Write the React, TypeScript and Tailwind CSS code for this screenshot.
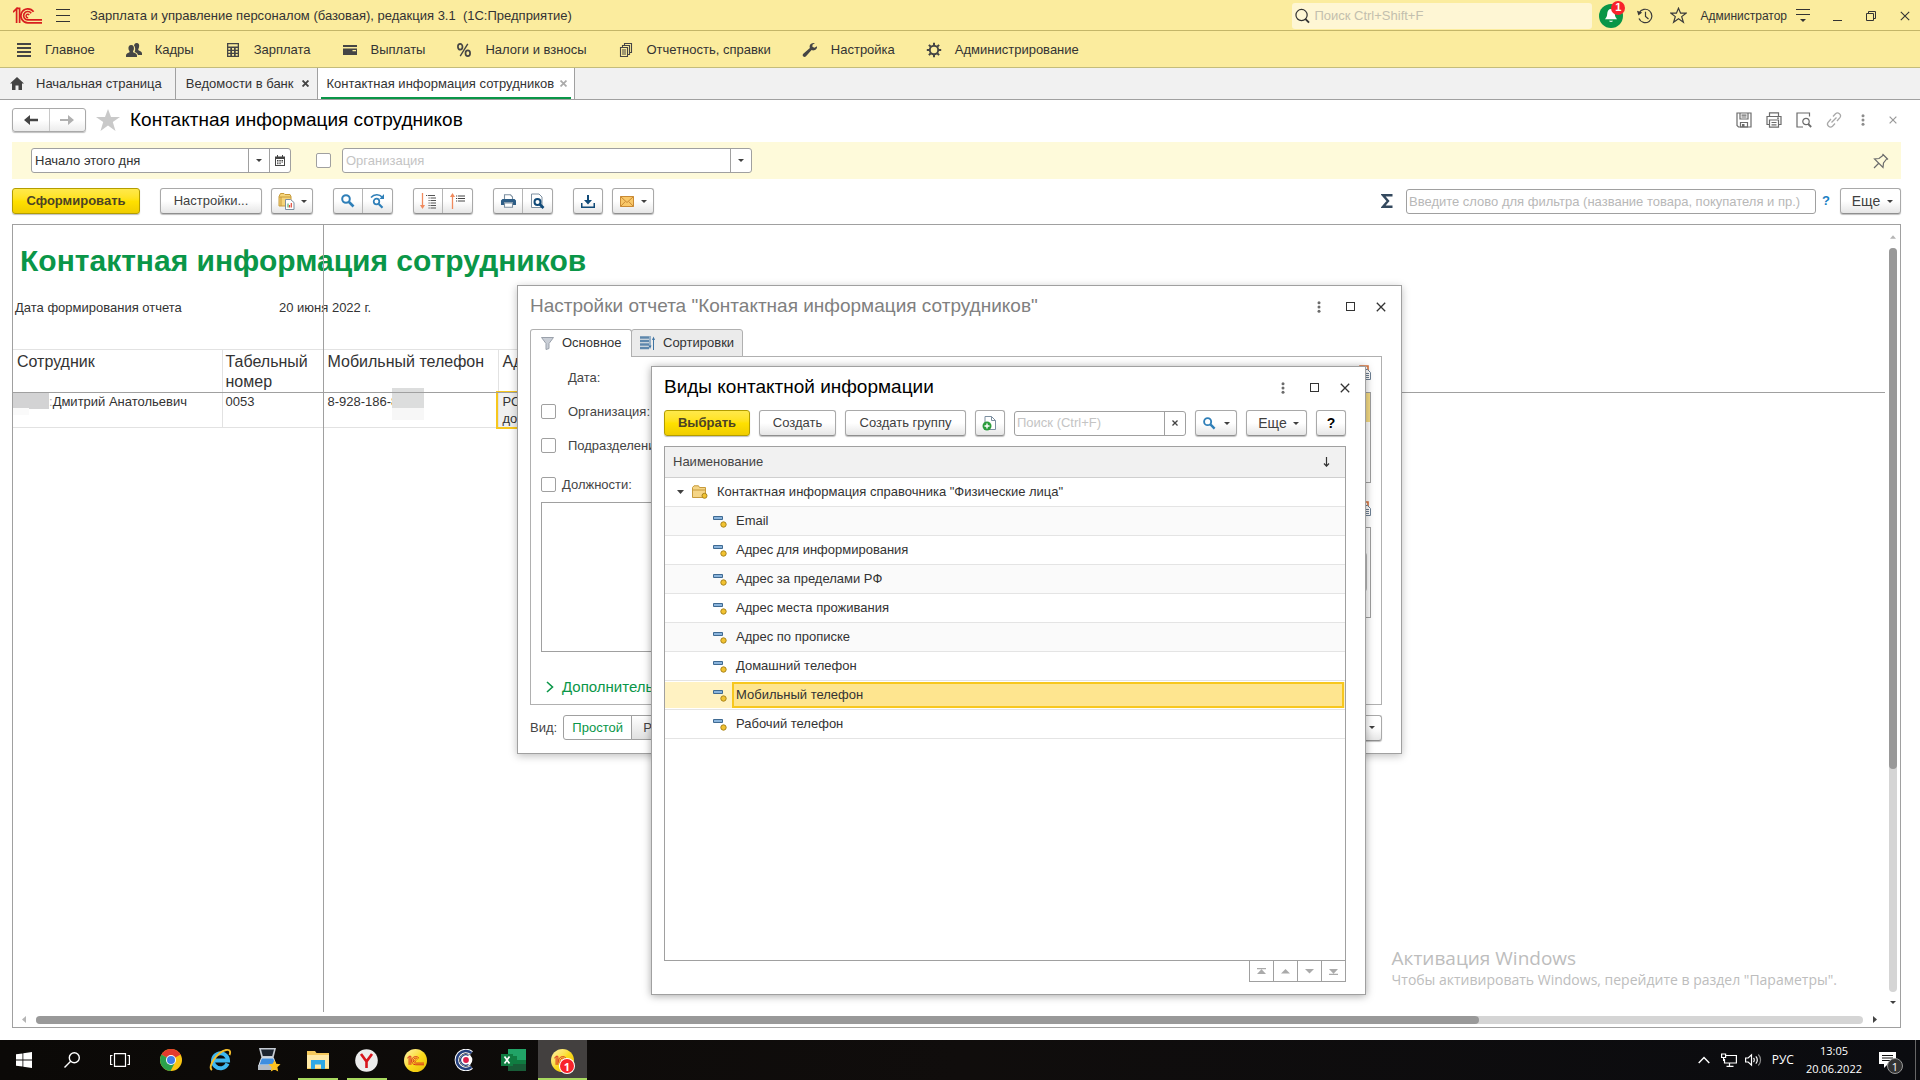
import React from "react";

type P = { children?: React.ReactNode; className?: string };

const BTN =
  "flex h-[26px] items-center justify-center rounded-[3px] border border-[#a9a9a9] border-b-[#8f8f8f] bg-linear-to-b from-white from-50% to-[#e6e6e6] text-sm text-[#404040] shadow-[0_1px_1px_rgba(0,0,0,0.25)]";
const YBTN =
  "flex h-[26px] items-center justify-center rounded-[3px] border border-[#b39d00] bg-linear-to-b from-[#ffe94a] via-[#ffe100] to-[#f0cd00] text-[13px] font-bold text-[#4c4326] shadow-[0_1px_1px_rgba(0,0,0,0.25)]";
const SEG = "flex h-full w-[30px] items-center justify-center";

function Caret({ className = "text-[#404040]" }: { className?: string }) {
  return (
    <svg width="6" height="3" viewBox="0 0 6 3" className={className} aria-hidden="true">
      <path d="M0 0h6L3 3z" fill="currentColor" />
    </svg>
  );
}

function Cross({ size = 7, w = 1.6, className = "" }: { size?: number; w?: number; className?: string }) {
  return (
    <svg width={size} height={size} viewBox="0 0 10 10" className={className} aria-hidden="true">
      <path d="M.8.8l8.4 8.4M9.2.8L.8 9.2" stroke="currentColor" strokeWidth={(w * 10) / size} fill="none" />
    </svg>
  );
}

function Dots({ className = "text-[#6b6b6b]" }: { className?: string }) {
  return (
    <svg width="4" height="12" viewBox="0 0 4 12" className={className} aria-hidden="true">
      <circle cx="2" cy="1.7" r="1.5" fill="currentColor" />
      <circle cx="2" cy="6" r="1.5" fill="currentColor" />
      <circle cx="2" cy="10.3" r="1.5" fill="currentColor" />
    </svg>
  );
}

function Magnifier({ size = 14, stroke = "#2f7fb8" }: { size?: number; stroke?: string }) {
  return (
    <svg width={size} height={size} viewBox="0 0 14 14" fill="none" stroke={stroke} aria-hidden="true">
      <circle cx="5" cy="5" r="3.8" strokeWidth="2" />
      <path d="M8 8l4.5 4.5" strokeWidth="2.6" />
    </svg>
  );
}

function LogoGlyph({ w, h, color }: { w: number; h: number; color: string }) {
  return (
    <svg width={w} height={h} viewBox="0 0 29 17" fill="none" stroke={color} strokeWidth="1.7" aria-hidden="true">
      <path d="M0 5.2L3.6 1.6V16M6.6 16V1.3H3.2" />
      <path d="M20.6 4.8A7 7 0 1 0 15 15.8H29" />
      <path d="M18.2 6.2A4.2 4.2 0 1 0 15 12.9H29" />
      <path d="M16.2 8a1.7 1.7 0 1 0 -1 2.6" strokeWidth="1.4" />
    </svg>
  );
}

/* ---------- title bar ---------- */

function TitleBar() {
  return (
    <header className="flex h-[31px] items-center border-b border-[#c4b668] bg-[#fbec9e] pt-px pl-[13px] text-[#333]">
      <LogoGlyph w={29} h={17} color="#d81e1e" />
      <button aria-label="Меню" className="ml-[14px] flex w-[14px] flex-col gap-[5px]">
        <span className="h-px w-full bg-[#333]" />
        <span className="h-px w-full bg-[#333]" />
        <span className="h-px w-full bg-[#333]" />
      </button>
      <h1 className="ml-5 flex-1 text-[13px] whitespace-pre">
        Зарплата и управление персоналом (базовая), редакция 3.1  (1С:Предприятие)
      </h1>
      <label className="flex h-[26px] w-[300px] items-center gap-1 rounded-[3px] bg-[#fef6d4] pl-[3px]">
        <svg width="16" height="16" viewBox="0 0 16 16" fill="none" stroke="#333" aria-hidden="true">
          <circle cx="7" cy="7" r="6" strokeWidth="1.3" />
          <path d="M11 11l4 4" strokeWidth="2" />
        </svg>
        <input
          aria-label="Поиск"
          placeholder="Поиск Ctrl+Shift+F"
          className="w-full bg-transparent text-[13px] outline-none placeholder:text-[#c3bfae]"
        />
      </label>
      <button aria-label="Уведомления" className="relative ml-[7px] flex size-6 items-center justify-center rounded-full bg-[#0a9648]">
        <svg width="14" height="16" viewBox="0 0 14 16" fill="#fff" aria-hidden="true">
          <path d="M7 1c2.6 0 3.6 2 3.8 5 .2 2.600 1 3.600 2.200 5.200H1C2.200 9.600 3 8.600 3.200 6 3.400 3 4.400 1 7 1zM5 12.800h4c-.3 1.500-3.700 1.500-4 0z" />
        </svg>
        <span className="absolute -top-[3px] left-3 flex size-[14px] items-center justify-center rounded-full bg-[#f8232c] text-[11px] leading-none font-bold text-white">
          1
        </span>
      </button>
      <button aria-label="История" className="ml-[14px]">
        <svg width="16" height="16" viewBox="0 0 16 16" fill="none" stroke="#3a3a3a" strokeWidth="1.2" aria-hidden="true">
          <path d="M2.200 5A6.700 6.700 0 1 1 2 10.500M8.500 3.800V8.500l3 2.500" />
          <path d="M0 2.800L5.200 4.600 1.400 7.400z" fill="#3a3a3a" stroke="none" />
        </svg>
      </button>
      <button aria-label="Избранное" className="ml-[17px]">
        <svg width="17" height="17" viewBox="0 0 17 17" fill="none" stroke="#3a3a3a" strokeWidth="1.2" aria-hidden="true">
          <path d="M8.500 1.200l2.100 5h5.400l-4.300 3.400 1.700 5.600-4.900-3.400-4.900 3.400 1.700-5.600L1 6.200h5.400z" />
        </svg>
      </button>
      <button className="ml-[13px] text-xs">Администратор</button>
      <button aria-label="Сервис" className="ml-[9px] flex w-[14px] flex-col items-center gap-[4px]">
        <span className="h-px w-full bg-[#333]" />
        <span className="h-px w-full bg-[#333]" />
        <Caret className="text-[#333]" />
      </button>
      <button aria-label="Свернуть" className="mt-[9px] ml-[23px] h-px w-[9px] bg-[#333]" />
      <button aria-label="Восстановить" className="ml-[24px]">
        <svg width="10" height="10" viewBox="0 0 10 10" fill="none" stroke="#333" aria-hidden="true">
          <path d="M.5 2.500h7v7h-7zM2.500 2.500v-2h7v7h-2" />
        </svg>
      </button>
      <button aria-label="Закрыть" className="mr-[10px] ml-[24px] text-[#333]">
        <Cross size={10} w={1.1} />
      </button>
    </header>
  );
}

/* ---------- main menu ---------- */

const G = "#454545";
const MENU: { label: string; icon: React.ReactNode }[] = [
  { label: "Главное", icon: <path d="M1 2h14M1 6h14M1 10h14M1 14h14" stroke={G} strokeWidth="1.8" /> },
  {
    label: "Кадры",
    icon: (
      <path
        fill={G}
        d="M10.500 1c2.500 0 3 2 2.500 4.200-.3 1.300-.8 1.800-.8 2.600 0 1 3.800 1.200 3.800 3.700V13h-4c-.3-1.600-1.800-2.400-3.300-3C9.500 8 9.400 5 8 3.500 8.400 2 9 1 10.500 1zM5.200 3c2.300 0 3 1.900 2.700 4C7.700 8.400 7 8.900 7 9.700c0 1.200 4 1.100 4 4V15H0v-1.300c0-2.900 3.600-2.800 3.600-4 0-.8-.9-1.300-1.100-2.700C2.200 4.900 3 3 5.200 3z"
      />
    ),
  },
  {
    label: "Зарплата",
    icon: (
      <path
        fill={G}
        fillRule="evenodd"
        d="M2 1h12v14H2zM3.300 2.300v2.200h9.400V2.300zM3.300 6v1.800h2V6zm3.700 0v1.800h2V6zm3.700 0v1.800h2V6zM3.300 9v1.800h2V9zM7 9v1.800h2V9zm3.700 0v1.800h2V9zM3.300 12v1.800h2V12zM7 12v1.800h2V12zm3.700 0v1.800h2V12z"
      />
    ),
  },
  { label: "Выплаты", icon: <path fill={G} d="M1 3h14v2H1zM1 6.500h14V13H1zM10.500 8v1.200H14V8z" fillRule="evenodd" /> },
  {
    label: "Налоги и взносы",
    icon: (
      <g fill="none" stroke={G}>
        <ellipse cx="4.200" cy="4.800" rx="2.300" ry="2.900" strokeWidth="1.700" />
        <ellipse cx="11.800" cy="11.200" rx="2.300" ry="2.900" strokeWidth="1.700" />
        <path d="M11.800 1.800L4.200 14.200" strokeWidth="1.400" />
      </g>
    ),
  },
  {
    label: "Отчетность, справки",
    icon: (
      <g fill="none" stroke={G} strokeWidth="1.100">
        <path d="M2.500 5.500h7v9h-7zM4.500 5.500v-2h7v9h-2M6.500 3.500v-2h7v9h-2M4 8h4M4 10h4M4 12h4" />
      </g>
    ),
  },
  {
    label: "Настройка",
    icon: (
      <path
        fill={G}
        d="M15 4.200l-2.600 1.600-2-1 .1-2.100L13 1.100c-2.300-.6-4.700.3-5.300 2.600-.2.900-.1 1.700.2 2.400L1.300 11.700c-.9.900-.8 2 .1 2.800.8.700 1.900.6 2.600-.3L9.600 8c.8.400 1.600.5 2.500.300 2.200-.5 3.300-2.200 2.900-4.100z"
      />
    ),
  },
  {
    label: "Администрирование",
    icon: (
      <g fill="none" stroke={G}>
        <circle cx="8" cy="8" r="4.200" strokeWidth="1.900" />
        <path
          d="M8 .8v2.700M8 12.500v2.700M.8 8h2.700M12.500 8h2.700M2.900 2.900l1.900 1.900M11.200 11.200l1.900 1.900M2.900 13.100l1.900-1.900M11.200 4.800l1.900-1.900"
          strokeWidth="2"
        />
      </g>
    ),
  },
];

function MainMenu() {
  return (
    <nav className="flex h-[37px] items-center gap-[31px] border-b border-[#c4bc7a] bg-[#fbec9e] pt-[2px] pl-4 text-[13px] text-[#333]">
      {MENU.map((m) => (
        <button key={m.label} className="flex items-center gap-[13px] whitespace-nowrap">
          <svg width="16" height="16" viewBox="0 0 16 16" aria-hidden="true">
            {m.icon}
          </svg>
          {m.label}
        </button>
      ))}
    </nav>
  );
}

function TabsBar() {
  return (
    <div className="flex h-8 border-b border-[#a0a0a0] bg-[#f1f1f1] text-[13px] text-[#333]">
      <button className="flex items-center gap-3 border-r border-[#a0a0a0] pr-[13px] pl-[10px]">
        <svg width="14" height="13" viewBox="0 0 14 13" fill="#444" aria-hidden="true">
          <path d="M7 0l7 6.500h-2V13H8.500V8.500h-3V13H2V6.500H0z" />
        </svg>
        Начальная страница
      </button>
      <div className="flex items-center gap-2 border-r border-[#a0a0a0] pr-2 pl-[10px]">
        <button>Ведомости в банк</button>
        <button aria-label="Закрыть вкладку" className="text-[#444]">
          <Cross size={7} w={1.900} />
        </button>
      </div>
      <div className="flex border-r border-[#a0a0a0] bg-white px-[3px]">
        <div className="flex items-center gap-[6px] border-b-2 border-[#0a9648] pt-[2px] pr-1 pl-[6px]">
          <button>Контактная информация сотрудников</button>
          <button aria-label="Закрыть вкладку" className="text-[#aaa]">
            <Cross size={7} w={1.700} />
          </button>
        </div>
      </div>
    </div>
  );
}

/* ---------- form header ---------- */

function FormHeader() {
  return (
    <div className="flex h-[42px] items-center pr-[23px] pb-[2px] pl-3">
      <div className="flex h-6 w-[74px] rounded-[3px] border border-[#a9a9a9] bg-linear-to-b from-white from-50% to-[#ececec] shadow-[0_1px_1px_rgba(0,0,0,0.25)]">
        <button aria-label="Назад" className="flex flex-1 items-center justify-center border-r border-[#c8c8c8]">
          <svg width="14" height="10" viewBox="0 0 14 10" aria-hidden="true">
            <path d="M6 0v3.800h8v2.400H6V10L0 5z" fill="#444" />
          </svg>
        </button>
        <button aria-label="Вперед" className="flex flex-1 items-center justify-center">
          <svg width="14" height="10" viewBox="0 0 14 10" aria-hidden="true">
            <path d="M8 0v4H0v2h8v4l6-5z" fill="#b0b0b0" />
          </svg>
        </button>
      </div>
      <button aria-label="В избранное" className="ml-[10px]">
        <svg width="24" height="22" viewBox="0 0 24 22" fill="#c9c9c9" aria-hidden="true">
          <path d="M12 0l3 8h9l-7.200 5L19.500 22 12 16.500 4.500 22l2.700-9L0 8h9z" />
        </svg>
      </button>
      <h2 className="ml-[10px] flex-1 text-[19px] text-black">Контактная информация сотрудников</h2>
      <div className="flex items-center text-[#6b6b6b]">
        <button aria-label="Сохранить">
          <svg width="16" height="16" viewBox="0 0 16 16" fill="none" stroke="currentColor" strokeWidth="1.200" aria-hidden="true">
            <path d="M1 1h14v14H2.500L1 13.500zM4 1v6h8V1M5.500 3.200h5M5.500 5h5" />
            <path d="M4.500 10.500h7V15h-7z" />
            <path d="M6 12h2.500v3H6z" fill="currentColor" stroke="none" />
          </svg>
        </button>
        <button aria-label="Печать" className="ml-[14px]">
          <svg width="16" height="16" viewBox="0 0 16 16" fill="none" stroke="currentColor" strokeWidth="1.200" aria-hidden="true">
            <path d="M3.500 4V.8h9V4M3.500 12.500H1V4.500h14v8h-2.500M3.500 8h9v7.200h-9zM5.500 10.500h5M5.500 12.800h5M11 6.200h2" />
          </svg>
        </button>
        <button aria-label="Просмотр" className="ml-[14px]">
          <svg width="16" height="16" viewBox="0 0 16 16" fill="none" stroke="currentColor" strokeWidth="1.200" aria-hidden="true">
            <path d="M13.500 4.500V1H1v14h6" />
            <circle cx="10" cy="9.500" r="3.200" />
            <path d="M12.200 12l3 3" strokeWidth="1.800" />
          </svg>
        </button>
        <button aria-label="Ссылка" className="ml-[14px] text-[#a8a8a8]">
          <svg width="16" height="16" viewBox="0 0 16 16" fill="none" stroke="currentColor" strokeWidth="1.300" aria-hidden="true">
            <path d="M7 4.500l2.500-2.700c2.500-2.300 6.500 1 4.400 3.800L11 9M9 11.500l-2.500 2.700c-2.500 2.300-6.500-1-4.400-3.800L5 7M5.500 10.500l5-5" />
          </svg>
        </button>
        <button aria-label="Еще действия" className="ml-[19px]">
          <Dots className="text-[#8c8c8c]" />
        </button>
        <button aria-label="Закрыть" className="ml-[24px] text-[#999]">
          <Cross size={8} w={1.200} />
        </button>
      </div>
    </div>
  );
}

function FilterBand() {
  return (
    <div className="mr-[19px] ml-3 flex h-[37px] items-center bg-[#fefada] pl-[19px] text-[13px]">
      <div className="flex h-[25px] w-[260px] rounded-[3px] border border-[#a0a0a0] bg-white">
        <input aria-label="Дата" defaultValue="Начало этого дня" className="min-w-0 flex-1 pl-[3px] text-[#333] outline-none" />
        <button aria-label="Выбрать период" className="flex w-[21px] items-center justify-center border-l border-[#a0a0a0]">
          <Caret />
        </button>
        <button aria-label="Календарь" className="flex w-[21px] items-center justify-center border-l border-[#a0a0a0]">
          <svg width="10" height="11" viewBox="0 0 10 11" aria-hidden="true">
            <path d="M0 1.500h10V11H0zM1 4v6h8V4z" fill="#444" fillRule="evenodd" />
            <path d="M2.500 0v2M7.500 0v2M2 5.500h1.500M4.300 5.500h1.500M6.500 5.500H8M2 7h1.500M4.300 7h1.500M6.500 7H8M2 8.700h1.500M4.300 8.700h1.500" stroke="#444" />
          </svg>
        </button>
      </div>
      <input
        type="checkbox"
        aria-label="Отбор по организации"
        className="ml-[25px] size-[15px] appearance-none rounded-[2px] border border-[#a0a0a0] bg-white"
      />
      <div className="ml-[11px] flex h-[25px] w-[410px] rounded-[3px] border border-[#a0a0a0] bg-white">
        <input
          aria-label="Организация"
          placeholder="Организация"
          className="min-w-0 flex-1 pl-[3px] outline-none placeholder:text-[#c4c4c4]"
        />
        <button aria-label="Выбрать организацию" className="flex w-[21px] items-center justify-center border-l border-[#a0a0a0]">
          <Caret />
        </button>
      </div>
      <button aria-label="Закрепить" className="mr-3 ml-auto">
        <svg width="16" height="16" viewBox="0 0 16 16" fill="none" stroke="#6b6b6b" strokeWidth="1.200" aria-hidden="true">
          <path d="M9.500 1l5.500 5.500M10.500 2L6 5.500 1.500 6l8.500 8.500.5-4.500L14 5.500M5.500 10.500L1 15" />
        </svg>
      </button>
    </div>
  );
}

function PagePlusIcon() {
  return (
    <svg width="16" height="16" viewBox="0 0 16 16" aria-hidden="true">
      <path d="M3 1.500h6.500l4 4v9H3z" fill="#fff" stroke="#7c8fa0" />
      <path d="M9.500 1.500v4h4" fill="none" stroke="#7c8fa0" />
      <circle cx="5" cy="11" r="4.500" fill="#2b9c3c" />
      <path d="M5 8.500v5M2.500 11h5" stroke="#fff" strokeWidth="1.400" />
    </svg>
  );
}

function Toolbar() {
  return (
    <div className="flex h-[45px] items-center pr-[19px] pb-px pl-3 text-[13px]">
      <button className={YBTN + " w-32"}>Сформировать</button>
      <button className={BTN + " ml-5 w-[102px] text-[13px]"}>Настройки...</button>
      <button aria-label="Варианты отчета" className={BTN + " ml-[9px] w-[42px] gap-[6px]"}>
        <svg width="17" height="17" viewBox="0 0 17 17" aria-hidden="true">
          <path d="M1 3.500V13h12V3.500L12 1.500H7l-1-1H2.500z" fill="#f6d57a" stroke="#c79a3a" />
          <path d="M1 4h12M3 4v9" stroke="#c79a3a" />
          <path d="M7.500 6.500h5l3.500 3v7H7.500z" fill="#fff" stroke="#7c8fa0" />
          <path d="M10 10.500v4" stroke="#3aa655" />
          <path d="M11.500 12v2.500" stroke="#e04a3a" strokeWidth="1.200" />
          <path d="M13.300 10v4.500" stroke="#e04a3a" strokeWidth="1.200" />
        </svg>
        <Caret />
      </button>
      <div className={BTN + " ml-5 w-[60px]"}>
        <button aria-label="Найти" className={SEG + " border-r border-[#b5b5b5]"}>
          <Magnifier />
        </button>
        <button aria-label="Найти далее" className={SEG}>
          <svg width="16" height="16" viewBox="0 0 16 16" fill="none" stroke="#2f7fb8" aria-hidden="true">
            <circle cx="6.500" cy="8.500" r="2.800" strokeWidth="1.700" />
            <path d="M8.800 11l3.700 3.700" strokeWidth="2.200" />
            <path d="M1 4.500C4 .8 9.500.8 12 4" strokeWidth="1.500" />
            <path d="M14 1v5H9.500z" fill="#2f7fb8" stroke="none" />
          </svg>
        </button>
      </div>
      <div className={BTN + " ml-5 w-[60px]"}>
        <button aria-label="Развернуть группы" className={SEG + " border-r border-[#b5b5b5]"}>
          <svg width="16" height="16" viewBox="0 0 16 16" fill="none" aria-hidden="true">
            <path d="M2.500 0v13" stroke="#f08a5d" strokeWidth="1.300" />
            <path d="M0 12h5l-2.500 4z" fill="#f08a5d" />
            <path d="M6 2.500h1.200M8 2.500h7M8.500 5h1.200M10.500 5H16M8.500 7.500h1.200M10.500 7.500H16M8.500 10h1.200M10.500 10H16M8.500 12.500h1.200M10.500 12.500H16M8.500 15h1.200M10.500 15H16" stroke="#555" />
          </svg>
        </button>
        <button aria-label="Свернуть группы" className={SEG}>
          <svg width="16" height="16" viewBox="0 0 16 16" fill="none" aria-hidden="true">
            <path d="M2.500 3v13" stroke="#f08a5d" strokeWidth="1.300" />
            <path d="M0 4h5L2.500 0z" fill="#f08a5d" />
            <path d="M6 3h1.200M8 3h7M6 5.500h1.200M8 5.500h7M6 8h1.200M8 8h7" stroke="#444" />
          </svg>
        </button>
      </div>
      <div className={BTN + " ml-5 w-[60px]"}>
        <button aria-label="Печать" className={SEG + " border-r border-[#b5b5b5]"}>
          <svg width="15" height="14" viewBox="0 0 15 14" aria-hidden="true">
            <path d="M3.500 5V.8h6L11.500 3v2" fill="#fff" stroke="#7c8fa0" strokeWidth="1.100" />
            <path d="M1.500 5h12L15 6.500V11h-3V8.500H3V11H0V6.500z" fill="#2d5d86" />
            <path d="M3.500 9h8v4.300h-8z" fill="#fff" stroke="#7c8fa0" strokeWidth="1.100" />
          </svg>
        </button>
        <button aria-label="Предварительный просмотр" className={SEG}>
          <svg width="15" height="16" viewBox="0 0 15 16" fill="none" aria-hidden="true">
            <path d="M1.500 1h7.500l3 3v10.500H1.500z" fill="#fff" stroke="#7c8fa0" />
            <circle cx="7.500" cy="9" r="3" stroke="#104a78" strokeWidth="2" />
            <path d="M9.500 11l4 4" stroke="#104a78" strokeWidth="2.600" />
          </svg>
        </button>
      </div>
      <button aria-label="Сохранить" className={BTN + " ml-5 w-[30px]"}>
        <svg width="14" height="13" viewBox="0 0 14 13" fill="#104a78" aria-hidden="true">
          <path d="M6 0h2v5h3L7 9.500 3 5h3zM0 8h1.500v3.500h11V8H14v5H0z" />
        </svg>
      </button>
      <button aria-label="Отправить" className={BTN + " ml-[9px] w-[42px] gap-[7px]"}>
        <svg width="14" height="11" viewBox="0 0 14 11" aria-hidden="true">
          <path d="M.5.5h13v10H.5z" fill="#f9c869" stroke="#c98a35" />
          <path d="M.5.5L7 6.500 13.500.5M.5 10.500l4.800-5M13.500 10.500l-4.800-5" fill="none" stroke="#c98a35" />
        </svg>
        <Caret />
      </button>
      <button aria-label="Сумма" className="ml-auto">
        <svg width="12" height="14" viewBox="0 0 12 14" fill="none" stroke="#34495e" strokeWidth="2.400" aria-hidden="true">
          <path d="M11.500 1.200H2l5 5.800-5 5.800h9.500" />
        </svg>
      </button>
      <input
        aria-label="Фильтр"
        placeholder="Введите слово для фильтра (название товара, покупателя и пр.)"
        className="ml-[13px] h-[25px] w-[410px] rounded-[3px] border border-[#a0a0a0] bg-white pl-[2px] outline-none placeholder:text-[#b8b8b8]"
      />
      <button aria-label="Справка" className="ml-[6px] w-[8px] font-bold text-[#1a7fc4]">
        ?
      </button>
      <button className={BTN + " ml-[10px] w-[61px] gap-[7px] pl-1"}>
        Еще <Caret />
      </button>
    </div>
  );
}

/* ---------- report ---------- */

function Report() {
  return (
    <section className="mr-[19px] mb-3 ml-3 flex flex-1 flex-col border border-[#a0a0a0] bg-white">
      <div className="flex flex-1">
        <div className="relative flex-1 overflow-hidden">
          <h3 className="pt-5 pl-[7px] text-[30px] leading-8 font-bold text-[#0a9648]">Контактная информация сотрудников</h3>
          <dl className="flex pt-[23px] pl-[2px] text-[13px] leading-4 text-[#333]">
            <dt className="w-[264px]">Дата формирования отчета</dt>
            <dd>20 июня 2022 г.</dd>
          </dl>
          <table className="mt-[33px] table-fixed border-collapse text-left text-[#333]">
            <colgroup>
              <col className="w-[209px]" />
              <col className="w-[101px]" />
              <col className="w-[175px]" />
              <col className="w-[240px]" />
            </colgroup>
            <thead>
              <tr className="h-[43px] border-t border-[#e2e2e2] align-top text-base leading-5">
                <th className="border-r border-[#e2e2e2] pt-[2px] pl-1 font-normal">Сотрудник</th>
                <th className="border-r border-[#e2e2e2] pt-[2px] pl-[3px] font-normal">
                  Табельный
                  <br />
                  номер
                </th>
                <th className="border-r border-[#e2e2e2] pt-[2px] pl-1 font-normal">Мобильный телефон</th>
                <th className="pt-[2px] pl-1 font-normal">Адрес</th>
              </tr>
            </thead>
            <tbody>
              <tr className="h-[33px] border-b border-[#e2e2e2] align-top text-[13px] leading-[17px]">
                <td className="border-r border-[#e2e2e2]">
                  <span className="flex">
                    <span className="h-4 w-9 bg-[#d3d3d4]" />
                    <span className="text-[#aaa]">:</span>
                    <span>Дмитрий Анатольевич</span>
                  </span>
                </td>
                <td className="border-r border-[#e2e2e2] pl-[3px]">0053</td>
                <td className="border-r border-[#e2e2e2] pl-1">8-928-186-8</td>
                <td className="bg-[#f0f0f0] pl-1 outline-2 outline-[#f7c71e]">
                  РО
                  <br />
                  до
                </td>
              </tr>
            </tbody>
          </table>
          <span className="absolute top-[163px] left-[379px] h-[20px] w-8 bg-[#dcdddd]" />
          <span className="absolute top-[183px] left-[379px] h-[12px] w-8 bg-[#f7f7f7]" />
          <span className="absolute top-[183px] left-0 h-[7px] w-4 bg-[#fafafa]" />
          <span className="absolute top-0 left-[310px] h-full w-px bg-[#a0a0a0]" />
          <span className="absolute top-[167px] left-0 h-px w-full bg-[#a0a0a0]" />
        </div>
        <div className="flex w-[15px] flex-col items-center pb-2">
          <svg width="6" height="4" viewBox="0 0 7 4" className="mt-[10px] mb-[9px]" aria-hidden="true">
            <path d="M0 4h7L3.500 0z" fill="#b5b5b5" />
          </svg>
          <div className="flex w-2 flex-1 flex-col rounded-full bg-[#d5d5d5]">
            <div className="h-[70%] rounded-full bg-[#999]" />
          </div>
          <span className="mt-[9px]">
            <Caret />
          </span>
        </div>
      </div>
      <div className="flex h-[15px] items-center pr-[23px] pl-[9px]">
        <svg width="4" height="7" viewBox="0 0 4 7" aria-hidden="true">
          <path d="M4 0v7L0 3.500z" fill="#b5b5b5" />
        </svg>
        <div className="mx-[10px] h-2 flex-1 rounded-full bg-[#d5d5d5]">
          <div className="h-full w-[79%] rounded-full bg-[#999]" />
        </div>
        <svg width="4" height="7" viewBox="0 0 4 7" aria-hidden="true">
          <path d="M0 0v7l4-3.500z" fill="#444" />
        </svg>
      </div>
    </section>
  );
}

/* ---------- dialogs ---------- */

function DialogControls() {
  return (
    <div className="flex items-center text-[#333]">
      <button aria-label="Действия">
        <Dots />
      </button>
      <button aria-label="Развернуть" className="ml-[25px] size-[9px] border border-[#333]" />
      <button aria-label="Закрыть" className="ml-[21px]">
        <Cross size={10} w={1.300} />
      </button>
    </div>
  );
}

function LockedPageIcon({ className = "" }: P) {
  return (
    <svg width="15" height="15" viewBox="0 0 15 15" className={className} aria-hidden="true">
      <path d="M4 6V1h8v5" fill="none" stroke="#d9743c" strokeWidth="1.600" />
      <path d="M5.500 4.500h6l3 3v7h-9z" fill="#fff" stroke="#6f8296" />
      <path d="M8 8.500h5M8 10.500h5M8 12.500h5" stroke="#6f8296" />
    </svg>
  );
}

const CHECK = "size-[15px] shrink-0 appearance-none rounded-[2px] border border-[#a0a0a0] bg-white";

function SettingsDialog() {
  return (
    <section
      role="dialog"
      aria-label="Настройки отчета"
      className="absolute top-[285px] left-[517px] flex h-[469px] w-[885px] flex-col border border-[#a0a0a0] bg-white pr-[19px] pl-3 text-[13px] text-[#444] shadow-[0_2px_8px_rgba(0,0,0,0.25)]"
    >
      <div className="-mr-1 flex h-[43px] items-center justify-between pb-[2px]">
        <h2 className="text-[19px] text-[#808080]">Настройки отчета "Контактная информация сотрудников"</h2>
        <DialogControls />
      </div>
      <div className="relative flex">
        <button className="relative z-10 -mb-px flex h-7 w-[102px] items-center gap-2 rounded-t-[3px] border border-b-0 border-[#b0b0b0] bg-white pb-px pl-[10px] text-[#333]">
          <svg width="13" height="13" viewBox="0 0 13 13" aria-hidden="true">
            <path d="M.5.5h12L8 6.500v5l-3 1v-6z" fill="#c9ced6" stroke="#9aa1ab" />
          </svg>
          Основное
        </button>
        <button className="-ml-px flex h-7 w-[112px] items-center gap-[7px] rounded-t-[3px] border border-[#b0b0b0] bg-[#ebebeb] pl-2 text-[#333]">
          <svg width="16" height="14" viewBox="0 0 16 14" fill="none" aria-hidden="true">
            <path d="M0 1.500h9M0 5h9M0 8.500h9M0 12h9" stroke="#5d87ac" strokeWidth="2.300" />
            <path d="M10 0v11M13.500 3v11" stroke="#3f74a3" />
            <path d="M8.500 9.500h3L10 13zM12 4h3l-1.500-3.500z" fill="#3f74a3" />
          </svg>
          Сортировки
        </button>
      </div>
      <div className="-mt-px flex flex-1 border border-[#b0b0b0] pl-[10px]">
        <div className="flex flex-1 flex-col">
          <div className="mt-3 flex h-[17px] items-center pl-[27px]">Дата:</div>
          <label className="mt-[17px] flex h-[17px] items-center gap-3">
            <input type="checkbox" className={CHECK} />
            Организация:
          </label>
          <label className="mt-[17px] flex h-[17px] items-center gap-3">
            <input type="checkbox" className={CHECK} />
            Подразделение:
          </label>
          <label className="mt-[22px] flex h-[17px] items-center gap-[6px]">
            <input type="checkbox" className={CHECK} />
            Должности:
          </label>
          <textarea aria-label="Должности" className="mt-[9px] h-[150px] w-[400px] resize-none border border-[#a0a0a0]" />
          <button className="mt-[23px] flex items-center gap-2 pl-[5px] text-[15px] leading-6 text-[#0a9648]">
            <svg width="8" height="12" viewBox="0 0 8 12" fill="none" stroke="currentColor" strokeWidth="1.600" aria-hidden="true">
              <path d="M1 1l5.500 5L1 11" />
            </svg>
            Дополнительно
          </button>
        </div>
        <div className="flex w-10 flex-col items-end pr-[10px]">
          <LockedPageIcon className="mt-[8px]" />
          <div className="mt-[12px] h-[91px] w-[30px] border border-[#a0a0a0]">
            <div className="h-[29px] bg-[#f7dd86]" />
          </div>
          <LockedPageIcon className="mt-[18px]" />
          <div className="mt-[11px] flex h-[91px] w-[30px] justify-end border border-[#a0a0a0]">
            <div className="mt-6 mr-[3px] h-10 w-2 rounded-full bg-[#bbb]" />
          </div>
        </div>
      </div>
      <div className="flex h-12 items-center pb-[3px]">
        <span>Вид:</span>
        <button className="ml-[6px] h-[25px] w-[69px] rounded-l-[3px] border border-[#a0a0a0] bg-white text-[#0a9648]">Простой</button>
        <button className="-ml-px h-[25px] w-28 rounded-r-[3px] border border-[#a0a0a0] bg-linear-to-b from-white to-[#e0e0e0] pl-[11px] text-left">
          Расширенный
        </button>
        <button aria-label="Еще" className={BTN + " ml-auto w-[61px] justify-end pr-[6px]"}>
          <Caret />
        </button>
      </div>
    </section>
  );
}

const KINDS = [
  "Email",
  "Адрес для информирования",
  "Адрес за пределами РФ",
  "Адрес места проживания",
  "Адрес по прописке",
  "Домашний телефон",
  "Мобильный телефон",
  "Рабочий телефон",
];

function ItemIcon() {
  return (
    <svg width="15" height="15" viewBox="0 -2 15 15" aria-hidden="true">
      <path d="M.5 1.500h9v3h-9z" fill="#8ab4dc" stroke="#3f6a92" />
      <circle cx="10.500" cy="9.500" r="2.700" fill="#f2c230" stroke="#a8841c" />
    </svg>
  );
}

function KindsDialog() {
  return (
    <section
      role="dialog"
      aria-label="Виды контактной информации"
      className="absolute top-[366px] left-[651px] flex h-[629px] w-[715px] flex-col border border-[#a0a0a0] bg-white pr-[19px] pb-3 pl-3 text-[13px] text-[#333] shadow-[0_1px_8px_rgba(0,0,0,0.35)]"
    >
      <div className="-mr-1 flex h-[43px] items-center justify-between pb-[2px]">
        <h2 className="text-[19px] text-black">Виды контактной информации</h2>
        <DialogControls />
      </div>
      <div className="flex items-center gap-[9px]">
        <button className={YBTN + " w-[86px]"}>Выбрать</button>
        <button className={BTN + " w-[77px] text-[13px]"}>Создать</button>
        <button className={BTN + " w-[121px] text-[13px]"}>Создать группу</button>
        <button aria-label="Создать копированием" className={BTN + " w-[30px]"}>
          <PagePlusIcon />
        </button>
        <div className="flex h-[25px] w-[172px] rounded-[3px] border border-[#a0a0a0]">
          <input
            aria-label="Поиск"
            placeholder="Поиск (Ctrl+F)"
            className="min-w-0 flex-1 pl-[2px] outline-none placeholder:text-[#c4c4c4]"
          />
          <button aria-label="Очистить" className="flex w-[21px] items-center justify-center border-l border-[#a0a0a0] text-[#444]">
            <Cross size={6} w={1.300} />
          </button>
        </div>
        <button aria-label="Найти" className={BTN + " w-[42px] gap-2"}>
          <Magnifier size={13} />
          <Caret />
        </button>
        <button className={BTN + " w-[61px] gap-[6px] pl-1"}>
          Еще <Caret />
        </button>
        <button aria-label="Справка" className={BTN + " w-[30px] font-bold text-black"}>
          ?
        </button>
      </div>
      <div className="mt-[10px] flex-1 border border-[#a0a0a0]">
        <table className="w-full border-collapse text-left">
          <thead>
            <tr className="h-[30px] border-b border-[#cfcfcf] bg-[#f1f1f1]">
              <th className="font-normal text-[#444]">
                <span className="flex items-center justify-between pr-[15px] pl-2">
                  Наименование
                  <svg width="7" height="10" viewBox="0 0 7 10" fill="none" stroke="#333" strokeWidth="1.200" aria-hidden="true">
                    <path d="M3.500 0v9M1 6.500l2.500 2.700L6 6.500" />
                  </svg>
                </span>
              </th>
            </tr>
          </thead>
          <tbody>
            <tr className="h-[29px] border-b border-[#e4e4e4]">
              <td>
                <span className="flex items-center pl-3">
                  <svg width="7" height="4" viewBox="0 0 7 4" fill="#404040" aria-hidden="true">
                    <path d="M0 0h7L3.500 4z" />
                  </svg>
                  <svg width="16" height="14" viewBox="0 0 16 14" className="mr-[9px] ml-2" aria-hidden="true">
                    <path d="M.5 2.500V12.500H13.500V2.500H7.500L6.500 .8H2z" fill="#f5d586" stroke="#c79a3a" />
                    <path d="M.8 5h12.500" stroke="#c79a3a" />
                    <circle cx="12.500" cy="10.800" r="2.500" fill="#f2c230" stroke="#a8841c" />
                  </svg>
                  Контактная информация справочника "Физические лица"
                </span>
              </td>
            </tr>
            {KINDS.map((k, i) =>
              k === "Мобильный телефон" ? (
                <tr key={k} className="h-[29px] border-b border-[#e4e4e4]">
                  <td>
                    <span className="flex h-[26px] items-center bg-[#fff2c2] pr-px pl-12">
                      <ItemIcon />
                      <span className="ml-1 flex h-full flex-1 items-center border-2 border-[#f7c71e] bg-[#fee58f] pl-[2px]">{k}</span>
                    </span>
                  </td>
                </tr>
              ) : (
                <tr key={k} className={i % 2 === 0 ? "h-[29px] border-b border-[#e4e4e4] bg-[#fafafa]" : "h-[29px] border-b border-[#e4e4e4]"}>
                  <td>
                    <span className="flex items-center gap-2 pl-12">
                      <ItemIcon />
                      {k}
                    </span>
                  </td>
                </tr>
              ),
            )}
          </tbody>
        </table>
      </div>
      <div className="-mt-px ml-auto flex text-[#999]">
        {["M0 0h9v1.300H0zM0 6h9L4.500 1.300z", "M0 5.500h9L4.500 1z", "M0 1h9L4.500 5.500z", "M0 5.700h9V7H0zM0 1h9L4.500 5.700z"].map((d, i) => (
          <button
            key={d}
            aria-label={["В начало", "Назад", "Далее", "В конец"][i]}
            className="-ml-px flex h-[22px] w-[25px] items-center justify-center border border-[#a0a0a0] bg-white"
          >
            <svg width="9" height="7" viewBox="0 0 9 7" fill="#aaa" aria-hidden="true">
              <path d={d} />
            </svg>
          </button>
        ))}
      </div>
    </section>
  );
}

/* ---------- taskbar ---------- */

function OneC() {
  return (
    <span className="flex size-[23px] items-center justify-center rounded-full bg-linear-to-br from-[#fff3a0] via-[#fbdc1e] to-[#e8bd00]">
      <LogoGlyph w={17} h={11} color="#d8321e" />
    </span>
  );
}

const APPS: { label: string; open?: boolean; active?: boolean; icon: React.ReactNode }[] = [
  {
    label: "Chrome",
    icon: (
      <svg width="22" height="22" viewBox="0 0 22 22">
        <circle cx="11" cy="11" r="11" fill="#f9c513" />
        <path d="M11 11L1.500 5.500A11 11 0 0 1 20.500 5.500z" fill="#e33b2e" />
        <path d="M1.500 5.500A11 11 0 0 0 10.500 22l4.600-8.700L11 11z" fill="#2ba14b" />
        <path d="M11 6h9.700l-.5-1H11z" fill="#e33b2e" />
        <circle cx="11" cy="11" r="5" fill="#fff" />
        <circle cx="11" cy="11" r="4" fill="#3f7de8" />
      </svg>
    ),
  },
  {
    label: "Internet Explorer",
    icon: (
      <svg width="24" height="24" viewBox="0 0 24 24" fill="none">
        <path d="M19.500 15.500A7.500 7.500 0 1 1 20 12.500H6" stroke="#3fb8f0" strokeWidth="4" />
        <path d="M4 22C-1 19 9 4 18 2c5-1 4.500 3 3.500 5" stroke="#f4bd2b" strokeWidth="1.900" />
      </svg>
    ),
  },
  {
    label: "Сканер",
    icon: (
      <svg width="24" height="24" viewBox="0 0 24 24">
        <path d="M2 0h17l-2.500 10h-12z" fill="#c6ccd4" />
        <path d="M4 1.500h13l-1.800 6.500H5.800z" fill="#1c2430" />
        <path d="M4.500 10h12l2.500 7H2z" fill="#3f8ee0" stroke="#dde3ea" />
        <path d="M1 17h18v5H1z" fill="#b4bbc4" />
        <path d="M17.500 12l1.800 3.800 4.200.5-3.100 2.900.8 4.200-3.700-2-3.700 2 .8-4.200-3.100-2.900 4.200-.5z" fill="#ffc21f" />
      </svg>
    ),
  },
  {
    label: "Проводник",
    open: true,
    icon: (
      <svg width="22" height="20" viewBox="0 0 22 20">
        <path d="M0 1h8l1.500 2H22v16H0z" fill="#f5c95c" />
        <path d="M0 5h22v13H0z" fill="#ffe9a6" />
        <path d="M4 10h14v9h-4v-4.500H8V19H4z" fill="#2fa8e6" />
      </svg>
    ),
  },
  {
    label: "Яндекс Браузер",
    open: true,
    icon: (
      <svg width="23" height="23" viewBox="0 0 23 23" fill="none">
        <circle cx="11.500" cy="11.500" r="11.300" fill="#ececec" />
        <path d="M6 5l5.500 7.500L17 5M11.500 12v7" stroke="#d8141c" strokeWidth="2.600" />
      </svg>
    ),
  },
  { label: "1С", icon: <OneC /> },
  {
    label: "Контур",
    icon: (
      <svg width="22" height="22" viewBox="0 0 22 22" fill="none">
        <path d="M17.500 4A9 9 0 1 0 17.500 18" stroke="#fff" strokeWidth="4.500" />
        <path d="M17.500 4A9 9 0 1 0 17.500 18" stroke="#243f7c" strokeWidth="2.600" />
        <circle cx="12" cy="11" r="6.300" fill="#fff" />
        <path d="M14.500 6.500a5.200 5.200 0 1 0 0 9" stroke="#243f7c" strokeWidth="1.200" />
        <circle cx="12" cy="11" r="2.900" fill="#dc1f4a" />
      </svg>
    ),
  },
  {
    label: "Excel",
    icon: (
      <svg width="25" height="22" viewBox="0 0 25 22">
        <path d="M7 0h18v22H7z" fill="#21a366" />
        <path d="M7 7h9v8H7zM16 11h9v4h-9z" fill="#107c41" />
        <path d="M7 15h18v7H7z" fill="#185c37" />
        <path d="M0 5h12v12H0z" fill="#107c41" />
        <path d="M3.500 7.500l5 7M8.500 7.500l-5 7" stroke="#fff" strokeWidth="1.700" />
      </svg>
    ),
  },
  { label: "1С:Предприятие", active: true, open: true, icon: <OneC /> },
];

function Taskbar() {
  return (
    <footer className="flex h-10 items-center bg-linear-to-r from-[#0b0907] via-[#100d0c] to-[#0b0c10] font-['Open_Sans','Noto_Sans',sans-serif] text-white">
      <button aria-label="Пуск" className="ml-4">
        <svg width="16" height="16" viewBox="0 0 16 16" fill="#fff">
          <path d="M0 2.300l6.500-.9v6.200H0zM7.300 1.300L16 0v7.600H7.300zM0 8.400h6.500v6.200L0 13.700zM7.300 8.400H16V16l-8.700-1.300z" />
        </svg>
      </button>
      <button aria-label="Поиск" className="ml-8">
        <svg width="16" height="16" viewBox="0 0 16 16" fill="none" stroke="#fff" strokeWidth="1.400">
          <circle cx="10.300" cy="5.700" r="5" />
          <path d="M6.700 9.300L.5 15.500" />
        </svg>
      </button>
      <button aria-label="Представление задач" className="ml-[30px]">
        <svg width="20" height="14" viewBox="0 0 20 14" fill="none" stroke="#fff" strokeWidth="1.200">
          <path d="M4.500.7h11v12.600h-11zM2.500 2.500H.6v9h1.900M17.500 2.500h1.900v9h-1.900" />
        </svg>
      </button>
      <div className="ml-4 flex h-full">
        {APPS.map((a) => (
          <button
            key={a.label}
            aria-label={a.label}
            className={
              a.active
                ? "relative flex h-full w-[49px] flex-col items-center justify-center bg-[#43403f]"
                : "relative flex h-full w-[49px] flex-col items-center justify-center"
            }
          >
            {a.icon}
            {a.open && !a.active && <span className="absolute bottom-0 h-[2px] w-10 bg-[#a8d95f]" />}
            {a.active && <span className="absolute bottom-0 h-[2px] w-full bg-[#a8d95f]" />}
            {a.active && (
              <span className="absolute top-[19px] left-[22px] flex size-[14px] items-center justify-center rounded-full bg-[#f8232c] text-[11px] leading-none font-bold ring-1 ring-white">
                1
              </span>
            )}
          </button>
        ))}
      </div>
      <div className="mr-1 ml-auto flex h-full items-center">
        <button aria-label="Скрытые значки">
          <svg width="12" height="8" viewBox="0 0 12 8" fill="none" stroke="#fff" strokeWidth="1.400">
            <path d="M.7 7L6 1.500 11.300 7" />
          </svg>
        </button>
        <svg width="16" height="14" viewBox="0 0 16 14" fill="none" stroke="#fff" strokeWidth="1.200" className="ml-[11px]">
          <path d="M5 2.500h10.400v7.500H3.500V6M8.500 10v3M5.500 13.300h7" />
          <path d="M.6 1h4v3.500h-4zM2.600 4.500V8" />
        </svg>
        <svg width="17" height="14" viewBox="0 0 17 14" fill="none" stroke="#fff" strokeWidth="1.200" className="ml-2">
          <path d="M.6 5h2.600L6.500 1.800v10.400L3.200 9H.6zM8.500 5c1 1 1 3 0 4M10.800 3.300c2 2 2 5.400 0 7.400" />
          <path d="M13.300 1.500c3 3 3 8 0 11" stroke="#888" />
        </svg>
        <span className="ml-[10px] text-xs">РУС</span>
        <div className="ml-3 flex flex-col items-center text-[11px] leading-[18px]">
          <span>13:05</span>
          <span>20.06.2022</span>
        </div>
        <button aria-label="Уведомления" className="relative ml-[17px]">
          <svg width="17" height="16" viewBox="0 0 17 16">
            <path d="M0 0h17v12H9l-4 4v-4H0z" fill="#fff" />
            <path d="M3 3.500h11M3 6h11M3 8.500h8" stroke="#111" />
          </svg>
          <span className="absolute top-[6px] left-[8px] flex size-4 items-center justify-center rounded-full border border-[#9a9a9a] bg-[#333] text-[11px] leading-none">
            1
          </span>
        </button>
        <span className="ml-[19px] h-full w-px bg-[#666]" />
      </div>
    </footer>
  );
}

export default function App() {
  return (
    <div className="relative flex min-h-screen flex-col overflow-hidden bg-white font-['Liberation_Sans',Arial,sans-serif]">
      <TitleBar />
      <MainMenu />
      <TabsBar />
      <main className="flex flex-1 flex-col">
        <FormHeader />
        <FilterBand />
        <Toolbar />
        <Report />
      </main>
      <Taskbar />
      <SettingsDialog />
      <KindsDialog />
      <div className="pointer-events-none absolute right-[83px] bottom-[90px] font-['Open_Sans','Noto_Sans',sans-serif] text-[#bdbdbd]">
        <p className="text-[19px] leading-6">Активация Windows</p>
        <p className="text-sm leading-5">Чтобы активировать Windows, перейдите в раздел "Параметры".</p>
      </div>
    </div>
  );
}
